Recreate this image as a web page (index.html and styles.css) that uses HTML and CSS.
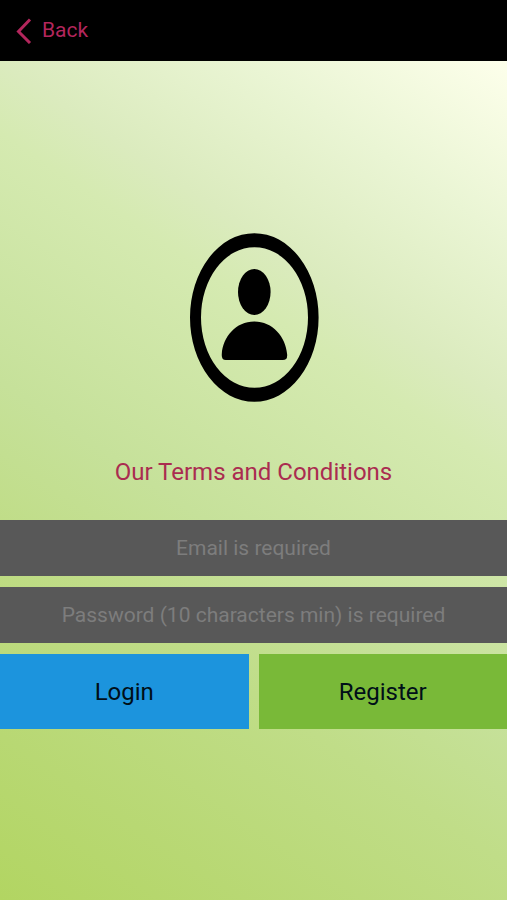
FILE: index.html
```html
<!DOCTYPE html>
<html lang="en">
<head>
  <meta charset="utf-8">
  <meta name="viewport" content="width=device-width, initial-scale=1">
  <title>Login</title>
  <link rel="stylesheet" href="styles.css">
</head>
<body>
  <header class="navbar">
    <a class="back" href="#">
      <svg class="back-icon" viewBox="0 0 16 26" aria-hidden="true">
        <path d="M14 1.500 2.500 13.500 14 25" />
      </svg>
      Back
    </a>
  </header>
  <main class="content">
    <svg class="avatar" viewBox="0 0 130 170" role="img" aria-label="User">
      <path fill-rule="evenodd" d="M1 84.500A64.300 84.300 0 0 1 129.600 84.500A64.300 84.300 0 0 1 1 84.500ZM12 84.500A53.500 70.300 0 0 0 119 84.500A53.500 70.300 0 0 0 12 84.500Z" />
      <ellipse cx="65.300" cy="59" rx="16.300" ry="23" />
      <path d="M32.800 121C33.800 104 46.800 88.500 65.300 88.500S96.800 104 98.100 121Q98.800 127 93.800 127H36.800Q32.300 127 32.800 121Z" />
    </svg>
    <a class="terms" href="#">Our Terms and Conditions</a>
    <form class="form">
      <input class="field" type="email" aria-label="Email" placeholder="Email is required">
      <input class="field" type="password" aria-label="Password" placeholder="Password (10 characters min) is required">
      <div class="actions">
        <button class="button login" type="button">Login</button>
        <button class="button register" type="button">Register</button>
      </div>
    </form>
  </main>
</body>
</html>
```

FILE: styles.css
```css
* {
  box-sizing: border-box;
}

body {
  margin: 0;
  min-height: 100vh;
  display: flex;
  flex-direction: column;
  font-family: Roboto, "Liberation Sans", sans-serif;
  font-size: 24px;
}

.navbar {
  display: flex;
  align-items: center;
  padding: 16px;
  background: #000;
}

.back {
  display: flex;
  align-items: center;
  gap: 10px;
  color: #b3265c;
  font-size: 21px;
  line-height: 29px;
  text-decoration: none;
}

.back-icon {
  width: 16px;
  height: 26px;
  fill: none;
  stroke: currentColor;
  stroke-width: 3;
}

.content {
  flex: 1;
  display: flex;
  flex-direction: column;
  align-items: center;
  padding: 172px 0 32px;
  background: linear-gradient(214deg, #fdffeb 0%, #eaf5d4 15%, #dbebbe 29%, #d5eab1 35%, #c6e19a 56%, #c0dd88 68%, #b8d873 86%, #b2d562 100%);
}

.avatar {
  width: 130px;
  height: 170px;
}

.terms {
  margin-top: 53px;
  color: #aa2c50;
  font-size: 24px;
  line-height: 32px;
  text-decoration: none;
}

.form {
  align-self: stretch;
  display: flex;
  flex-direction: column;
  gap: 11px;
  margin-top: 32px;
}

.field {
  width: 100%;
  height: 56px;
  padding: 0 16px;
  border: 0;
  border-radius: 0;
  background: #585858;
  color: #fff;
  font: inherit;
  font-size: 21px;
  text-align: center;
}

.field::placeholder {
  color: #7d7d7d;
  opacity: 1;
}

.actions {
  display: grid;
  grid-template-columns: 1fr 1fr;
  gap: 10px;
}

.button {
  height: 75px;
  padding: 0;
  border: 0;
  color: #000f18;
  font: inherit;
}

.login {
  background: #1c94dd;
}

.register {
  background: #79b938;
}
```
